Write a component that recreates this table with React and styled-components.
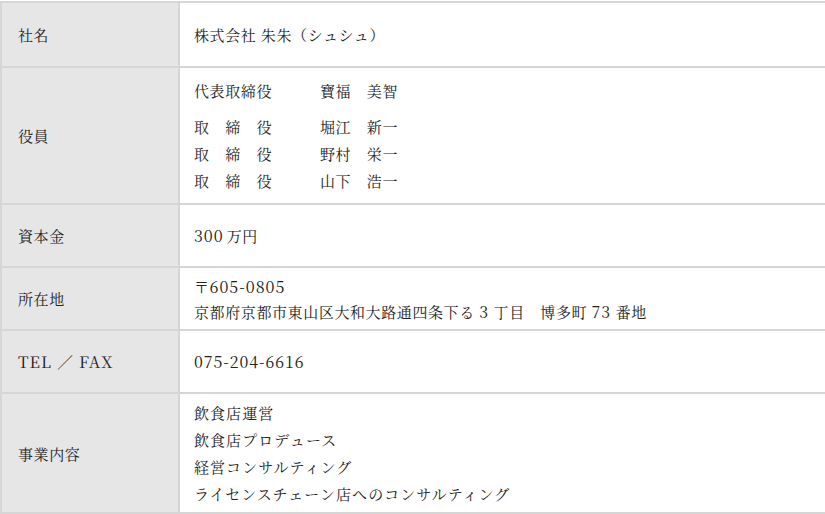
import { Fragment } from 'react';
import styled, { createGlobalStyle } from 'styled-components';

const GlobalStyle = createGlobalStyle`
    html, body {
        margin: 0;
        padding: 0;
        background: #fff;
    }
    body {
        font-family: "Noto Serif CJK JP", "Liberation Serif", "Noto Sans CJK JP", serif;
        color: #222;
        font-size: 15px;
        letter-spacing: 0.04em;
    }
`;

const Table = styled.div`
    width: 825px;
    padding-top: 1px;
    border-bottom: 2px solid #d6d6d6;
`;

const Row = styled.div`
    display: grid;
    grid-template-columns: 180px 1fr;
    height: ${(p) => p.$h || 61}px;
    border-top: 2px solid #d6d6d6;
`;

const Head = styled.div`
    display: flex;
    align-items: center;
    padding-left: 16px;
    background: #e6e6e7;
    border-left: 2px solid #d6d6d6;
    border-right: 2px solid #d6d6d6;
    line-height: 27px;
`;

const Cell = styled.div`
    display: flex;
    flex-direction: column;
    justify-content: center;
    padding: 0 14px;
    line-height: ${(p) => p.$lh || 27}px;
`;

const Num = styled.span`
    font-size: 16px;
    line-height: 1;
    letter-spacing: 0.06em;
    margin-right: ${(p) => p.$gap || 0}px;
`;

const Business = styled.div`
    letter-spacing: 0.07em;
`;

const Officers = styled.div`
    display: grid;
    grid-template-columns: 126px 1fr;
`;

const Title = styled.div`
    margin-bottom: ${(p) => (p.$first ? 9 : 0)}px;
`;

const officers = [
    ['代表取締役', '寶福　美智'],
    ['取　締　役', '堀江　新一'],
    ['取　締　役', '野村　栄一'],
    ['取　締　役', '山下　浩一'],
];

const business = ['飲食店運営', '飲食店プロデュース', '経営コンサルティング', 'ライセンスチェーン店へのコンサルティング'];

function App() {
    return (
        <>
            <GlobalStyle />
            <Table>
                <Row $h={63}>
                    <Head>社名</Head>
                    <Cell>株式会社 朱朱（シュシュ）</Cell>
                </Row>
                <Row $h={135}>
                    <Head>役員</Head>
                    <Cell>
                        <Officers>
                            {officers.map(([t, n], i) => (
                                <Fragment key={i}>
                                    <Title $first={i === 0}>{t}</Title>
                                    <Title $first={i === 0}>{n}</Title>
                                </Fragment>
                            ))}
                        </Officers>
                    </Cell>
                </Row>
                <Row>
                    <Head>資本金</Head>
                    <Cell>
                        <div>
                            <Num $gap={3}>300</Num>万円
                        </div>
                    </Cell>
                </Row>
                <Row>
                    <Head>所在地</Head>
                    <Cell $lh={25}>
                        <div>
                            〒<Num>605-0805</Num>
                        </div>
                        <div>
                            京都府京都市東山区大和大路通四条下る <Num>3</Num> 丁目　博多町 <Num>73</Num> 番地
                        </div>
                    </Cell>
                </Row>
                <Row>
                    <Head>
                        <Num>TEL ／ FAX</Num>
                    </Head>
                    <Cell>
                        <div>
                            <Num>075-204-6616</Num>
                        </div>
                    </Cell>
                </Row>
                <Row $h={118}>
                    <Head>事業内容</Head>
                    <Cell>
                        {business.map((b) => (
                            <Business key={b}>{b}</Business>
                        ))}
                    </Cell>
                </Row>
            </Table>
        </>
    );
}

export default App;
